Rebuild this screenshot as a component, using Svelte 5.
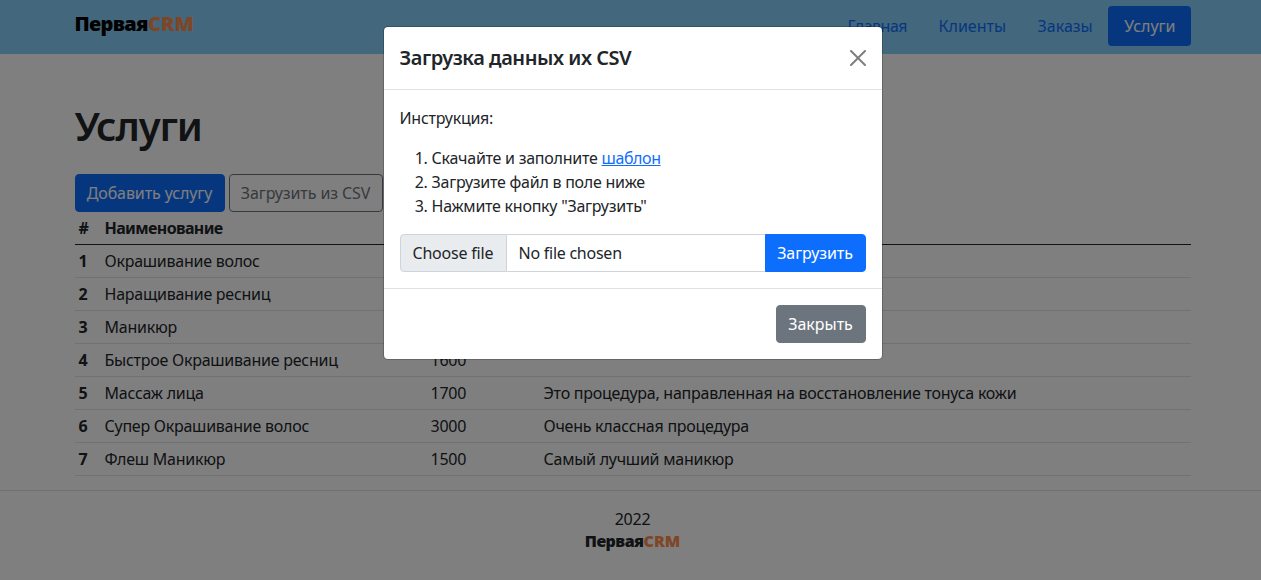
<script>
  const nav = [
    { label: 'Главная', tune: 'nav-home' },
    { label: 'Клиенты', tune: '' },
    { label: 'Заказы', tune: '' },
    { label: 'Услуги', tune: '', active: true }
  ];
  const services = [
    { name: 'Окрашивание волос' },
    { name: 'Наращивание ресниц' },
    { name: 'Маникюр' },
    { name: 'Быстрое Окрашивание ресниц', price: '1600' },
    { name: 'Массаж лица', price: '1700', note: 'Это процедура, направленная на восстановление тонуса кожи' },
    { name: 'Супер Окрашивание волос', price: '3000', note: 'Очень классная процедура' },
    { name: 'Флеш Маникюр', price: '1500', note: 'Самый лучший маникюр' }
  ];
</script>

<div class="page">
  <header>
    <div class="container bar">
      <a class="brand" href="#home">Первая<span>CRM</span></a>
      <nav>
        {#each nav as item}
          <a href="#nav" class={item.tune} class:active={item.active}>{item.label}</a>
        {/each}
      </nav>
    </div>
  </header>

  <main class="container">
    <h1>Услуги</h1>
    <div class="actions">
      <button class="btn primary add">Добавить услугу</button>
      <button class="btn outline">Загрузить из CSV</button>
    </div>
    <table>
      <thead>
        <tr><th class="num">#</th><th class="name">Наименование</th><th class="price"></th><th></th></tr>
      </thead>
      <tbody>
        {#each services as service, i}
          <tr><th>{i + 1}</th><td>{service.name}</td><td>{service.price ?? ''}</td><td>{service.note ?? ''}</td></tr>
        {/each}
      </tbody>
    </table>
  </main>

  <footer>
    <div>2022</div>
    <div class="brand small">Первая<span>CRM</span></div>
  </footer>

  <div class="backdrop">
    <div class="modal" role="dialog">
      <div class="modal-header">
        <h5>Загрузка данных их CSV</h5>
        <button class="close" aria-label="Закрыть">
          <svg viewBox="0 0 16 16" width="16" height="16"><path d="M.293.293a1 1 0 011.414 0L8 6.586 14.293.293a1 1 0 111.414 1.414L9.414 8l6.293 6.293a1 1 0 01-1.414 1.414L8 9.414l-6.293 6.293a1 1 0 01-1.414-1.414L6.586 8 .293 1.707a1 1 0 010-1.414z" /></svg>
        </button>
      </div>
      <div class="modal-body">
        <p>Инструкция:</p>
        <ol>
          <li>Скачайте и заполните <a href="#template">шаблон</a></li>
          <li>Загрузите файл в поле ниже</li>
          <li>Нажмите кнопку "Загрузить"</li>
        </ol>
        <div class="file-group">
          <div class="choose">Choose file</div>
          <div class="chosen">No file chosen</div>
          <button class="btn primary upload">Загрузить</button>
        </div>
      </div>
      <div class="modal-footer">
        <button class="btn secondary">Закрыть</button>
      </div>
    </div>
  </div>
</div>

<style>
  :global(body) { overflow: hidden; }
  .page, .page * { box-sizing: border-box; }
  .page {
    position: relative;
    width: 1265px;
    height: 580px;
    overflow: hidden;
    background: #fff;
    color: #212529;
    font: 16px/24px "Noto Sans", sans-serif;
    letter-spacing: -0.25px;
  }
  .container { width: 1116px; margin: 0 auto; }
  header { height: 54px; background: #87cefa; }
  .bar { display: flex; justify-content: space-between; padding-top: 6px; }
  .brand {
    padding-top: 6px;
    color: #000;
    font-size: 20px;
    font-weight: 900;
    line-height: 24px;
    letter-spacing: -0.65px;
    text-decoration: none;
  }
  .brand span { color: #ff8c4b; letter-spacing: 0; }
  nav { display: flex; }
  nav a {
    height: 40px;
    padding: 8px 15px 8px 16.5px;
    border-radius: 4px;
    color: #0d6efd;
    letter-spacing: 0;
    text-decoration: none;
  }
  nav a.nav-home { letter-spacing: -0.5px; }
  nav a.active { background: #0d6efd; color: #fff; }
  h1 {
    margin: 48px 0 24px;
    font-size: 40px;
    font-weight: 600;
    line-height: 48px;
    letter-spacing: -1.1px;
  }
  .actions { display: flex; gap: 4px; }
  .btn {
    height: 38px;
    padding: 0;
    border: 1px solid transparent;
    border-radius: 4px;
    background: none;
    font: inherit;
    letter-spacing: -0.1px;
    white-space: nowrap;
  }
  .primary { background: #0d6efd; border-color: #0d6efd; color: #fff; }
  .add { width: 150px; }
  .outline { width: 154px; border-color: #6c757d; color: #6c757d; }
  .secondary { width: 90px; background: #6c757d; border-color: #6c757d; color: #fff; letter-spacing: 0; }
  table { width: 100%; border-spacing: 0; table-layout: fixed; }
  th, td { height: 33px; padding: 4px; border-bottom: 1px solid #dee2e6; text-align: left; }
  th { font-weight: 700; }
  thead th { border-bottom-color: #212529; letter-spacing: -0.62px; }
  .num { width: 26px; }
  .name { width: 326px; }
  .price { width: 113px; }
  footer {
    margin-top: 14px;
    padding-top: 16px;
    border-top: 1px solid #dee2e6;
    text-align: center;
  }
  .brand.small { padding: 0; color: #212529; font-size: 16px; line-height: 20px; letter-spacing: -0.5px; }
  .backdrop {
    position: absolute;
    inset: 0;
    padding-top: 26px;
    background: rgba(0, 0, 0, 0.5);
  }
  .modal {
    width: 500px;
    margin: 0 auto;
    border: 1px solid rgba(0, 0, 0, 0.2);
    border-radius: 5px;
    background: #fff;
    background-clip: padding-box;
  }
  .modal-header {
    display: flex;
    align-items: center;
    justify-content: space-between;
    height: 63px;
    padding: 16px;
    border-bottom: 1px solid #dee2e6;
  }
  h5 { margin: 0; font-size: 20px; font-weight: 600; line-height: 30px; letter-spacing: -0.45px; }
  .close { display: flex; padding: 0; border: 0; background: none; opacity: 0.5; }
  .modal-body { padding: 16px; }
  p { margin: 0 0 16px; }
  ol { margin: 0 0 16px; padding-left: 32px; }
  li a { color: #0d6efd; letter-spacing: -0.4px; }
  .file-group { display: flex; height: 38px; }
  .choose, .chosen { padding: 6px 0 0 12px; border: 1px solid #ced4da; line-height: 24px; }
  .choose { width: 107px; border-radius: 4px 0 0 4px; background: #e9ecef; letter-spacing: -0.2px; }
  .chosen { flex: 1; border-left: 0; border-right: 0; }
  .upload { width: 101px; border-radius: 0 4px 4px 0; }
  .modal-footer {
    display: flex;
    justify-content: flex-end;
    padding: 16px;
    border-top: 1px solid #dee2e6;
  }
</style>
